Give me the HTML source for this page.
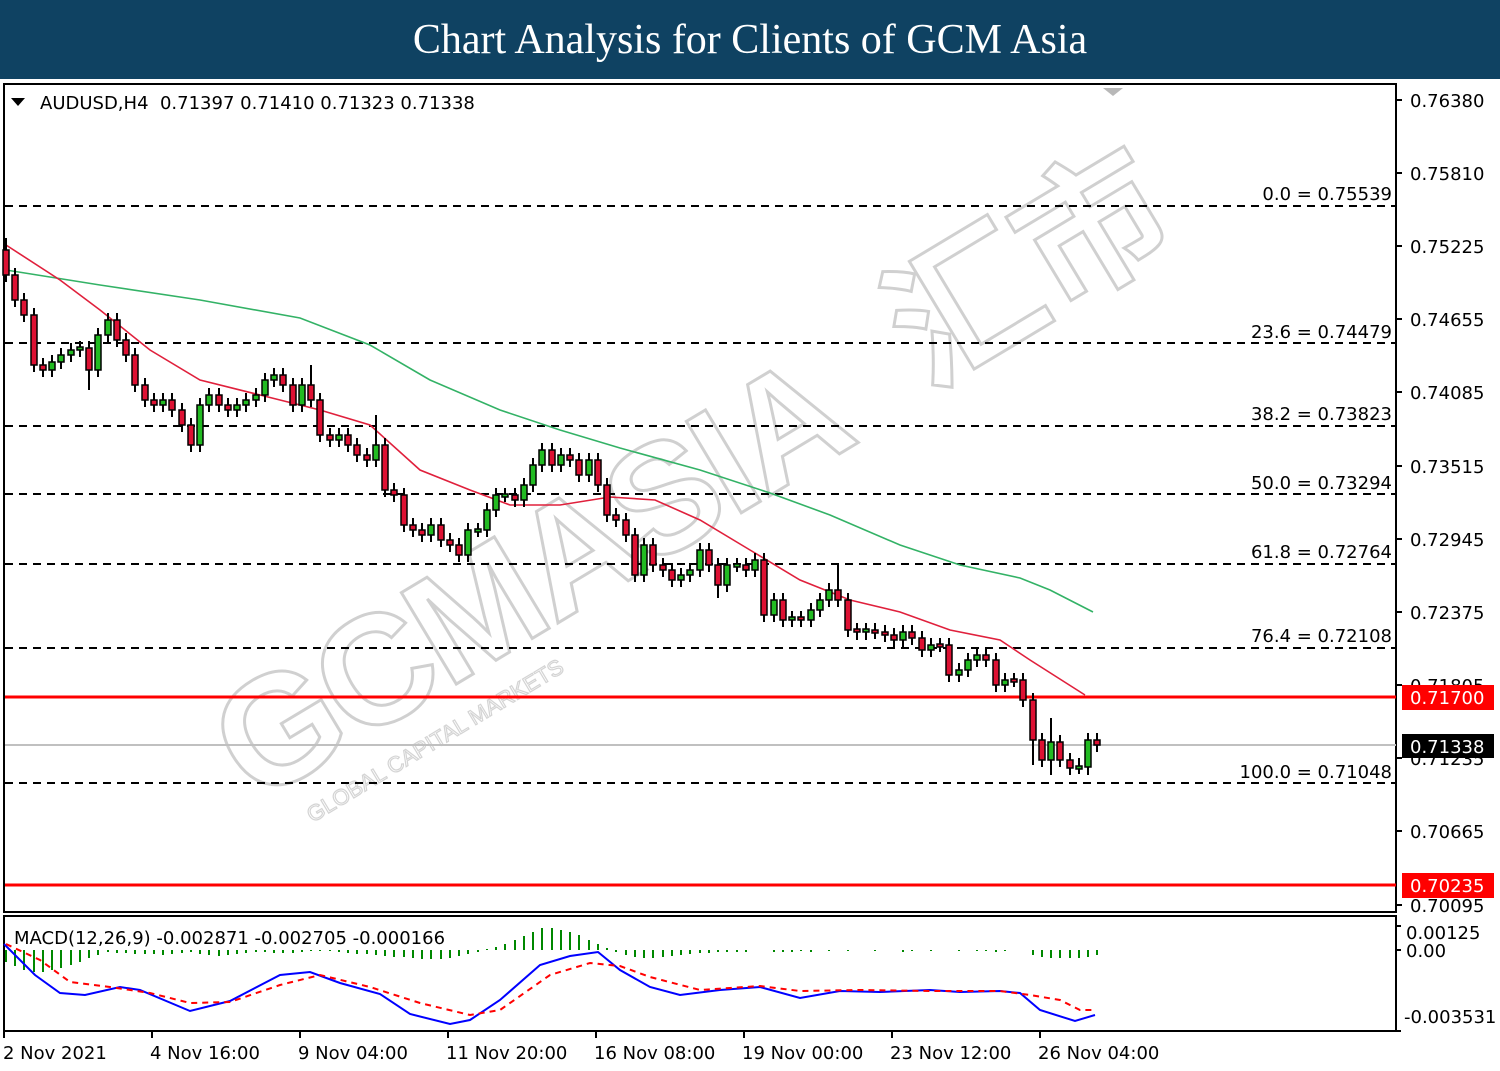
<!DOCTYPE html>
<html><head><meta charset="utf-8"><style>
html,body{margin:0;padding:0;background:#fff;width:1500px;height:1071px;overflow:hidden}
#hdr{position:absolute;left:0;top:0;width:1500px;height:79px;background:#0f4262;color:#fff;font-family:"Liberation Serif",serif;font-size:42px;text-align:center;line-height:80px}
svg{position:absolute;left:0;top:0}
text{font-family:"DejaVu Sans","Liberation Sans",sans-serif;font-size:18px;fill:#000}
</style></head><body>
<div id="hdr">Chart Analysis for Clients of GCM Asia</div>
<svg width="1500" height="1071" xmlns="http://www.w3.org/2000/svg">
<rect x="4" y="84" width="1392" height="828" fill="#fff" stroke="#000" stroke-width="2"/>
<rect x="4" y="916" width="1392" height="115" fill="#fff" stroke="#000" stroke-width="2"/>
<g transform="translate(255,805) rotate(-31)">
<text x="0" y="0" style="font-family:'Liberation Sans',sans-serif;font-size:155px;font-weight:bold;fill:none;stroke:#d0d0d0;stroke-width:3;letter-spacing:-4px">GCMASIA</text>
<text x="790" y="-10" style="font-size:150px;font-weight:bold;fill:none;stroke:#d0d0d0;stroke-width:3;font-family:'Noto Sans CJK SC',sans-serif">汇市</text>
<text x="40" y="45" style="font-family:'Liberation Sans',sans-serif;font-size:22px;fill:none;stroke:#d4d4d4;stroke-width:1.2">GLOBAL CAPITAL MARKETS</text>
</g>
<polygon points="1103,88 1123,88 1113,96" fill="#b8b8b8"/>
<g stroke="#000" stroke-width="2" stroke-dasharray="8,6">
<line x1="5" y1="206" x2="1395" y2="206"/><line x1="5" y1="343" x2="1395" y2="343"/>
<line x1="5" y1="426" x2="1395" y2="426"/><line x1="5" y1="494" x2="1395" y2="494"/>
<line x1="5" y1="564" x2="1395" y2="564"/><line x1="5" y1="648" x2="1395" y2="648"/>
<line x1="5" y1="783" x2="1395" y2="783"/></g>
<g text-anchor="end">
<text x="1392" y="200">0.0 = 0.75539</text><text x="1392" y="338">23.6 = 0.74479</text>
<text x="1392" y="420">38.2 = 0.73823</text><text x="1392" y="489">50.0 = 0.73294</text>
<text x="1392" y="558">61.8 = 0.72764</text><text x="1392" y="642">76.4 = 0.72108</text>
<text x="1392" y="778">100.0 = 0.71048</text></g>
<line x1="5" y1="745" x2="1396" y2="745" stroke="#c0c0c0" stroke-width="2"/>
<line x1="5" y1="697" x2="1396" y2="697" stroke="#f00" stroke-width="3"/>
<line x1="5" y1="885" x2="1396" y2="885" stroke="#f00" stroke-width="3"/>
<polyline fill="none" stroke="#33b266" stroke-width="1.6" points="6,270 100,285 200,300 300,318 370,345 430,380 500,410 560,430 620,448 700,470 770,493 830,515 900,545 960,565 1020,578 1050,590 1093,612"/>
<polyline fill="none" stroke="#e0203c" stroke-width="1.6" points="6,245 60,280 100,310 150,350 200,380 260,395 320,410 370,425 420,470 470,490 510,505 560,505 610,497 655,500 700,520 750,550 800,580 850,600 900,612 950,630 1000,640 1030,660 1085,695"/>
<path fill="none" stroke="#000" stroke-width="2" d="M6 238V282M15 268V307M24 293V322M34 308V372M43 358V377M52 355V377M61 348V369M71 343V362M80 341V357M89 341V390M98 328V377M108 313V342M117 313V347M126 333V362M135 348V392M145 378V407M154 393V412M163 393V412M172 393V417M182 403V432M191 418V452M200 398V452M209 388V412M219 388V412M228 398V417M237 398V417M246 393V412M256 388V407M265 373V402M274 368V387M283 368V392M293 378V412M302 378V412M311 365V407M320 393V442M330 428V447M339 428V447M348 428V452M357 438V462M367 448V467M376 415V467M385 438V497M394 483V502M404 488V532M413 518V537M422 523V542M431 518V542M441 518V547M450 533V552M459 538V562M468 523V562M478 523V537M487 503V537M496 488V517M505 488V502M515 488V507M524 478V507M533 458V492M542 443V472M552 443V472M561 448V472M570 448V467M579 453V482M589 453V482M598 453V492M607 478V522M616 508V527M626 513V542M635 528V582M644 538V582M653 538V572M663 558V577M672 563V587M681 568V587M690 563V582M700 543V577M709 543V572M718 558V598M727 558V592M737 558V572M746 558V577M755 553V577M764 553V622M774 593V622M783 593V627M792 611V627M801 611V627M811 603V627M820 593V617M829 583V607M838 565V607M848 593V637M857 623V640M866 623V640M875 623V639M885 625V642M894 628V647M903 625V647M912 625V645M922 631V657M931 638V657M940 638V652M949 638V682M959 663V682M968 653V677M977 648V667M986 648V667M996 653V692M1005 673V692M1014 673V687M1023 673V707M1033 693V765M1042 733V767M1051 718V775M1060 735V767M1070 753V775M1079 758V774M1088 733V775M1097 733V752"/>
<g fill="#dd1133" stroke="#000" stroke-width="1.5">
<rect x="3" y="250" width="6" height="25"/><rect x="12" y="275" width="6" height="25"/><rect x="21" y="300" width="6" height="15"/><rect x="31" y="315" width="6" height="50"/><rect x="40" y="365" width="6" height="5"/><rect x="86" y="348" width="6" height="22"/><rect x="114" y="320" width="6" height="20"/><rect x="123" y="340" width="6" height="15"/><rect x="132" y="355" width="6" height="30"/><rect x="142" y="385" width="6" height="15"/><rect x="151" y="400" width="6" height="5"/><rect x="169" y="400" width="6" height="10"/><rect x="179" y="410" width="6" height="15"/><rect x="188" y="425" width="6" height="20"/><rect x="216" y="395" width="6" height="10"/><rect x="225" y="405" width="6" height="5"/><rect x="280" y="375" width="6" height="10"/><rect x="290" y="385" width="6" height="20"/><rect x="308" y="385" width="6" height="15"/><rect x="317" y="400" width="6" height="35"/><rect x="327" y="435" width="6" height="5"/><rect x="345" y="435" width="6" height="10"/><rect x="354" y="445" width="6" height="10"/><rect x="364" y="455" width="6" height="5"/><rect x="382" y="445" width="6" height="45"/><rect x="391" y="490" width="6" height="5"/><rect x="401" y="495" width="6" height="30"/><rect x="410" y="525" width="6" height="5"/><rect x="419" y="530" width="6" height="5"/><rect x="438" y="525" width="6" height="15"/><rect x="447" y="540" width="6" height="5"/><rect x="456" y="545" width="6" height="10"/><rect x="512" y="495" width="6" height="5"/><rect x="549" y="450" width="6" height="15"/><rect x="567" y="455" width="6" height="5"/><rect x="576" y="460" width="6" height="15"/><rect x="595" y="460" width="6" height="25"/><rect x="604" y="485" width="6" height="30"/><rect x="613" y="515" width="6" height="5"/><rect x="623" y="520" width="6" height="15"/><rect x="632" y="535" width="6" height="40"/><rect x="650" y="545" width="6" height="20"/><rect x="660" y="565" width="6" height="5"/><rect x="669" y="570" width="6" height="10"/><rect x="706" y="550" width="6" height="15"/><rect x="715" y="565" width="6" height="20"/><rect x="743" y="565" width="6" height="5"/><rect x="761" y="560" width="6" height="55"/><rect x="780" y="600" width="6" height="20"/><rect x="798" y="617" width="6" height="3"/><rect x="835" y="590" width="6" height="10"/><rect x="845" y="600" width="6" height="30"/><rect x="854" y="629" width="6" height="3"/><rect x="872" y="630" width="6" height="3"/><rect x="882" y="632" width="6" height="3"/><rect x="891" y="635" width="6" height="5"/><rect x="909" y="632" width="6" height="6"/><rect x="919" y="638" width="6" height="12"/><rect x="937" y="644" width="6" height="3"/><rect x="946" y="645" width="6" height="30"/><rect x="983" y="655" width="6" height="5"/><rect x="993" y="660" width="6" height="25"/><rect x="1011" y="679" width="6" height="3"/><rect x="1020" y="680" width="6" height="20"/><rect x="1030" y="700" width="6" height="40"/><rect x="1039" y="740" width="6" height="20"/><rect x="1057" y="742" width="6" height="18"/><rect x="1067" y="760" width="6" height="8"/><rect x="1094" y="740" width="6" height="5"/>
</g>
<g fill="#22bb22" stroke="#000" stroke-width="1.5">
<rect x="49" y="362" width="6" height="8"/><rect x="58" y="355" width="6" height="7"/><rect x="68" y="350" width="6" height="5"/><rect x="77" y="347" width="6" height="3"/><rect x="95" y="335" width="6" height="35"/><rect x="105" y="320" width="6" height="15"/><rect x="160" y="400" width="6" height="5"/><rect x="197" y="405" width="6" height="40"/><rect x="206" y="395" width="6" height="10"/><rect x="234" y="405" width="6" height="5"/><rect x="243" y="400" width="6" height="5"/><rect x="253" y="395" width="6" height="5"/><rect x="262" y="380" width="6" height="15"/><rect x="271" y="375" width="6" height="5"/><rect x="299" y="385" width="6" height="20"/><rect x="336" y="435" width="6" height="5"/><rect x="373" y="445" width="6" height="15"/><rect x="428" y="525" width="6" height="10"/><rect x="465" y="530" width="6" height="25"/><rect x="475" y="529" width="6" height="3"/><rect x="484" y="510" width="6" height="20"/><rect x="493" y="495" width="6" height="15"/><rect x="502" y="494" width="6" height="3"/><rect x="521" y="485" width="6" height="15"/><rect x="530" y="465" width="6" height="20"/><rect x="539" y="450" width="6" height="15"/><rect x="558" y="455" width="6" height="10"/><rect x="586" y="460" width="6" height="15"/><rect x="641" y="545" width="6" height="30"/><rect x="678" y="575" width="6" height="5"/><rect x="687" y="570" width="6" height="5"/><rect x="697" y="550" width="6" height="20"/><rect x="724" y="565" width="6" height="20"/><rect x="734" y="564" width="6" height="3"/><rect x="752" y="560" width="6" height="10"/><rect x="771" y="600" width="6" height="15"/><rect x="789" y="617" width="6" height="3"/><rect x="808" y="610" width="6" height="10"/><rect x="817" y="600" width="6" height="10"/><rect x="826" y="590" width="6" height="10"/><rect x="863" y="629" width="6" height="3"/><rect x="900" y="632" width="6" height="8"/><rect x="928" y="645" width="6" height="5"/><rect x="956" y="670" width="6" height="5"/><rect x="965" y="660" width="6" height="10"/><rect x="974" y="655" width="6" height="5"/><rect x="1002" y="680" width="6" height="5"/><rect x="1048" y="742" width="6" height="18"/><rect x="1076" y="766" width="6" height="3"/><rect x="1085" y="740" width="6" height="27"/>
</g>
<path fill="none" stroke="#008800" stroke-width="2" d="M6 950v12M15 950v16M24 950v20M34 950v22M43 950v22M52 950v20M61 950v18M71 950v15M80 950v12M89 950v8M98 950v5M108 950v2M117 950v3M126 950v3M135 950v4M145 950v4M154 950v4M163 950v5M172 950v4M182 950v3M191 950v2M200 950v4M209 950v5M219 950v6M228 950v5M237 950v4M246 950v3M256 950v2M265 950v2M274 950v3M283 950v3M293 950v3M302 950v2M311 950v1M320 950v1M330 950v1M339 950v2M348 950v3M357 950v4M367 950v4M376 950v5M385 950v6M394 950v7M404 950v7M413 950v8M422 950v9M431 950v9M441 950v9M450 950v8M459 950v6M468 950v4M478 950v2M487 950v-1M496 950v-3M505 950v-6M515 950v-10M524 950v-14M533 950v-18M542 950v-22M552 950v-22M561 950v-20M570 950v-18M579 950v-15M589 950v-10M598 950v-6M607 950v-2M616 950v2M626 950v5M635 950v7M644 950v8M653 950v8M663 950v7M672 950v6M681 950v5M690 950v4M700 950v3M709 950v3M718 950v2M727 950v2M737 950v2M746 950v2M774 950v2M783 950v2M792 950v2M801 950v1M811 950v2M829 950v1M848 950v1M875 950v1M903 950v2M912 950v1M931 950v1M959 950v1M977 950v1M986 950v1M996 950v2M1005 950v1M1033 950v5M1042 950v7M1051 950v8M1060 950v8M1070 950v8M1079 950v8M1088 950v7M1097 950v5"/>
<polyline fill="none" stroke="#00f" stroke-width="2" points="4,944 35,975 60,993 85,995 120,987 140,990 190,1011 230,1001 280,975 310,972 340,983 380,994 410,1014 450,1024 470,1020 500,1000 540,965 570,956 598,952 620,970 650,987 680,995 720,990 760,987 800,998 840,991 880,992 930,990 960,992 1000,991 1020,993 1040,1010 1075,1021 1095,1015"/>
<polyline fill="none" stroke="#f00" stroke-width="2" stroke-dasharray="6,5" points="6,944 40,960 70,982 110,987 150,993 190,1003 230,1002 280,985 320,975 370,987 420,1003 470,1015 500,1010 550,975 590,963 620,966 650,977 700,990 760,986 800,991 860,990 930,991 1000,991 1030,995 1060,1000 1080,1010 1095,1010"/>
<text x="40" y="109">AUDUSD,H4&#160;&#160;0.71397 0.71410 0.71323 0.71338</text>
<polygon points="11,98 25,98 18,106" fill="#000"/>
<text x="14" y="944">MACD(12,26,9) -0.002871 -0.002705 -0.000166</text>
<path stroke="#000" stroke-width="2" d="M1396 100h6M1396 173h6M1396 246h6M1396 319h6M1396 392h6M1396 466h6M1396 539h6M1396 612h6M1396 685h6M1396 758h6M1396 831h6M1396 905h6M1396 926h5M1396 950h5M1396 1031h5M4 1031v7M152 1031v7M300 1031v7M448 1031v7M596 1031v7M744 1031v7M892 1031v7M1040 1031v7"/>
<g>
<text x="1410" y="107">0.76380</text><text x="1410" y="180">0.75810</text><text x="1410" y="253">0.75225</text><text x="1410" y="326">0.74655</text><text x="1410" y="399">0.74085</text><text x="1410" y="473">0.73515</text><text x="1410" y="546">0.72945</text><text x="1410" y="619">0.72375</text><text x="1410" y="692">0.71805</text><text x="1410" y="765">0.71235</text><text x="1410" y="838">0.70665</text><text x="1410" y="912">0.70095</text>
<text x="1406" y="939">0.00125</text><text x="1406" y="957">0.00</text><text x="1404" y="1023">-0.003531</text>
<text x="3" y="1059">2 Nov 2021</text><text x="150" y="1059">4 Nov 16:00</text><text x="298" y="1059">9 Nov 04:00</text><text x="446" y="1059">11 Nov 20:00</text><text x="594" y="1059">16 Nov 08:00</text><text x="742" y="1059">19 Nov 00:00</text><text x="890" y="1059">23 Nov 12:00</text><text x="1038" y="1059">26 Nov 04:00</text>
</g>
<rect x="1402" y="685" width="92" height="25" fill="#f00"/><text x="1410" y="704" style="fill:#fff">0.71700</text>
<rect x="1402" y="734" width="92" height="24" fill="#000"/><text x="1410" y="753" style="fill:#fff">0.71338</text>
<rect x="1402" y="873" width="92" height="25" fill="#f00"/><text x="1410" y="892" style="fill:#fff">0.70235</text>
</svg>
</body></html>
